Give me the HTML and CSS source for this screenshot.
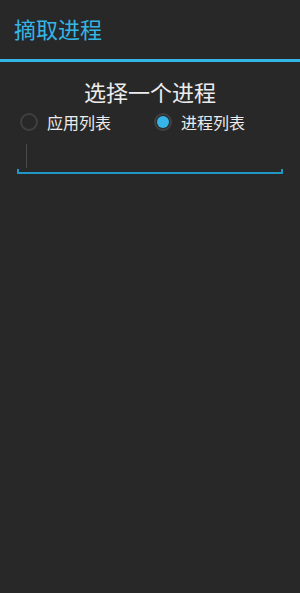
FILE: index.html
```html
<!DOCTYPE html>
<html lang="zh">
<head>
  <meta charset="UTF-8">
  <title>摘取进程</title>
  <meta name="viewport" content="width=device-width, initial-scale=1.0">
  <link rel="stylesheet" href="styles.css">
</head>
<body>

  <div class="action-bar">
    <div class="title">摘取进程</div>
  </div>

  <div class="content">
    <div class="heading">选择一个进程</div>

    <div class="radio-group">
      <label class="radio">
        <span class="circle"></span>
        <span class="label">应用列表</span>
      </label>
      <label class="radio checked">
        <span class="circle"></span>
        <span class="label">进程列表</span>
      </label>
    </div>

    <div class="edit-text">
      <span class="cursor"></span>
    </div>
  </div>

</body>
</html>
```

FILE: styles.css
```css
html, body {
  margin: 0;
  padding: 0;
  height: 100%;
}

body {
  background: #282828;
  color: #ececec;
  font-family: "Noto Sans CJK SC", "Noto Sans", sans-serif;
}

.action-bar {
  height: 59px;
  border-bottom: 3px solid #33b5e5;
  display: flex;
  align-items: center;
  padding-left: 14px;
}

.title {
  font-size: 22px;
  color: #33b5e5;
  margin-top: -3px;
}

.content {
  padding: 0 17px;
}

.heading {
  text-align: center;
  font-size: 22px;
  line-height: 28px;
  margin-top: 15px;
}

.radio-group {
  display: flex;
  margin-top: 4px;
}

.radio {
  display: flex;
  align-items: center;
  height: 26px;
  font-size: 16px;
}

.radio + .radio {
  margin-left: 40px;
}

.circle {
  width: 14px;
  height: 14px;
  border: 2px solid #404040;
  border-radius: 50%;
  margin-left: 3px;
  margin-right: 9px;
  position: relative;
}

.checked .circle::after {
  content: "";
  position: absolute;
  left: 1px;
  top: 1px;
  width: 12px;
  height: 12px;
  border-radius: 50%;
  background: #35b5e8;
}

.edit-text {
  margin-top: 13px;
  height: 24px;
  border-bottom: 2px solid #2196c4;
  position: relative;
}

.edit-text::before,
.edit-text::after {
  content: "";
  position: absolute;
  bottom: -2px;
  width: 2px;
  height: 5px;
  background: #2196c4;
}

.edit-text::before { left: 0; }
.edit-text::after { right: 0; }

.cursor {
  position: absolute;
  left: 9px;
  top: -4px;
  width: 1px;
  height: 24px;
  background: #4a4a4a;
}
```
